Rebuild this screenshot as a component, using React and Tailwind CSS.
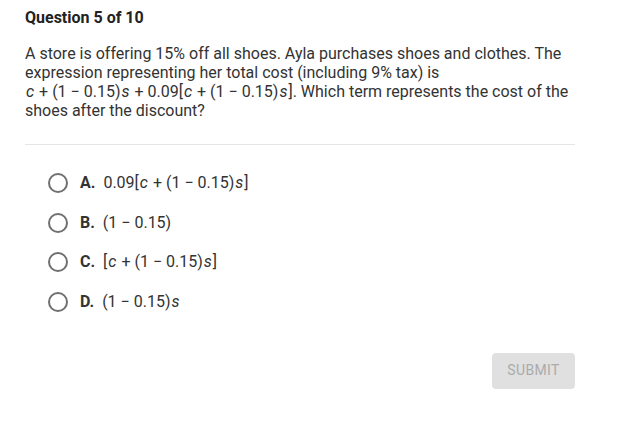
const V = ({ children }) => <i className="mx-[1px]">{children}</i>;

export default function App() {
    const options = [
        { letter: 'A.', body: <>0.09[<V>c</V> + (1 − 0.15)<V>s</V>]</> },
        { letter: 'B.', body: <>(1 − 0.15)</> },
        { letter: 'C.', body: <>[<V>c</V> + (1 − 0.15)<V>s</V>]</> },
        { letter: 'D.', body: <>(1 − 0.15)<V>s</V></> },
    ];

    return (
        <div className="w-[634px] h-[423px] bg-white text-[#333] font-['Roboto',sans-serif] pl-[25px] pr-[59px] pt-[8px]">
            <h1 className="text-[16px] font-bold text-[#222] leading-[20px]">Question 5 of 10</h1>

            <p className="mt-[16px] text-[16px] leading-[19px] text-[#333]">
                A store is offering 15% off all shoes. Ayla purchases shoes and clothes. The expression representing her total cost (including 9% tax) is
                <br />
                <V>c</V> + (1 − 0.15)<V>s</V> + 0.09[<V>c</V> + (1 − 0.15)<V>s</V>]. Which term represents the cost of the shoes after the discount?
            </p>

            <div className="mt-[24px] border-t border-[#e5e5e5]" />

            <div className="mt-[28px] flex flex-col gap-[19.5px] pl-[23px]">
                {options.map((o) => (
                    <div key={o.letter} className="flex items-center h-[20px]">
                        <span className="w-[20px] h-[20px] rounded-full border-2 border-[#707070] shrink-0" />
                        <span className="ml-[12px] text-[16px] font-bold text-[#333]">{o.letter}</span>
                        <span className="ml-[8px] text-[16px] text-[#333]">{o.body}</span>
                    </div>
                ))}
            </div>

            <div className="mt-[41px] flex justify-end">
                <button className="w-[83px] h-[36px] rounded-[4px] bg-[#e0e0e0] text-[14px] text-[#ababab] tracking-wide">
                    SUBMIT
                </button>
            </div>
        </div>
    );
}
